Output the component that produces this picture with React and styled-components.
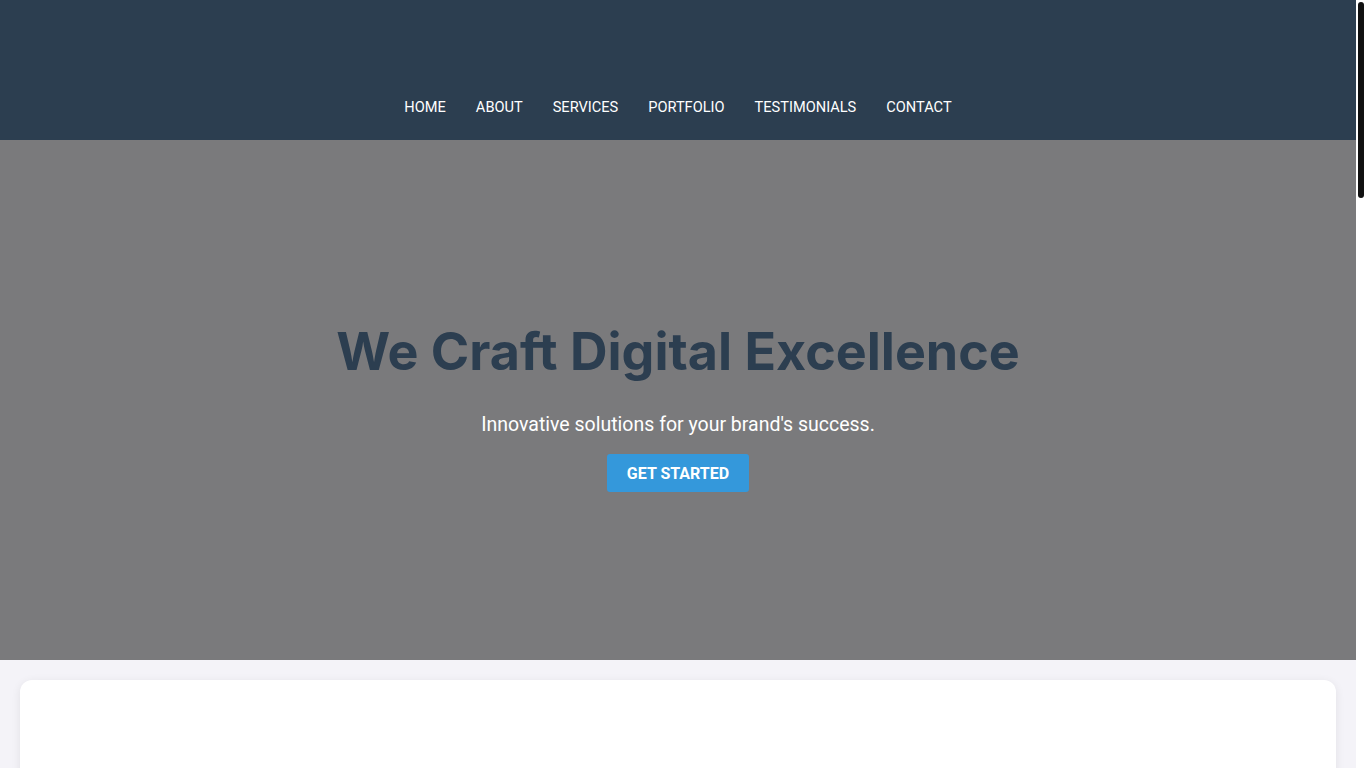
import styled, { createGlobalStyle } from "styled-components";

const GlobalStyle = createGlobalStyle`
  html, body {
    margin: 0;
    padding: 0;
    background: #f4f3f8;
    font-family: Roboto, "Liberation Sans", sans-serif;
  }
  * {
    box-sizing: border-box;
  }
  ::-webkit-scrollbar {
    display: none;
  }
`;

const Page = styled.div`
  width: calc(100% - 10px);
`;

// stand-in for the page scrollbar visible in the screenshot
const ScrollTrack = styled.div`
  position: fixed;
  top: 0;
  right: 0;
  width: 10px;
  height: 100vh;
  background: #ffffff;
  padding: 2px 2px 0 2px;
`;

const ScrollThumb = styled.div`
  width: 6px;
  height: 196px;
  background: #111111;
  border-radius: 3px;
`;

const Header = styled.header`
  height: 140px;
  background: #2c3e50;
  display: flex;
  flex-direction: column;
  justify-content: flex-end;
  align-items: center;
  padding-bottom: 24px;
`;

const Nav = styled.nav`
  display: flex;
  gap: 30px;
`;

const NavLink = styled.a`
  color: #ffffff;
  font-size: 14.6px;
  font-weight: 400;
  text-decoration: none;
  text-transform: uppercase;
  cursor: pointer;
`;

const Hero = styled.section`
  height: 520px;
  background: #7a7a7c;
  display: flex;
  flex-direction: column;
  align-items: center;
  justify-content: center;
  padding-top: 12px;
`;

const Title = styled.h1`
  margin: 0 0 30px;
  font-family: Inter, "Open Sans", sans-serif;
  font-weight: 700;
  font-size: 52px;
  color: #2c3e50;
`;

const Subtitle = styled.p`
  margin: 0 0 18px;
  color: #ffffff;
  font-size: 19.5px;
`;

const CTA = styled.button`
  background: #3498db;
  color: #ffffff;
  border: none;
  border-radius: 3px;
  width: 142px;
  height: 38px;
  font-family: Roboto, sans-serif;
  font-size: 16px;
  font-weight: 700;
  cursor: pointer;
`;

const Main = styled.main`
  padding: 20px;
`;

const Card = styled.div`
  background: #ffffff;
  border-radius: 12px;
  box-shadow: 0 2px 10px rgba(0, 0, 0, 0.08);
  height: 2310px;
`;

const links = ["Home", "About", "Services", "Portfolio", "Testimonials", "Contact"];

export default function App() {
  return (
    <Page>
      <GlobalStyle />
      <Header>
        <Nav>
          {links.map((l) => (
            <NavLink key={l}>{l}</NavLink>
          ))}
        </Nav>
      </Header>
      <Hero>
        <Title>We Craft Digital Excellence</Title>
        <Subtitle>Innovative solutions for your brand's success.</Subtitle>
        <CTA>GET STARTED</CTA>
      </Hero>
      <Main>
        <Card />
      </Main>
      <ScrollTrack>
        <ScrollThumb />
      </ScrollTrack>
    </Page>
  );
}
